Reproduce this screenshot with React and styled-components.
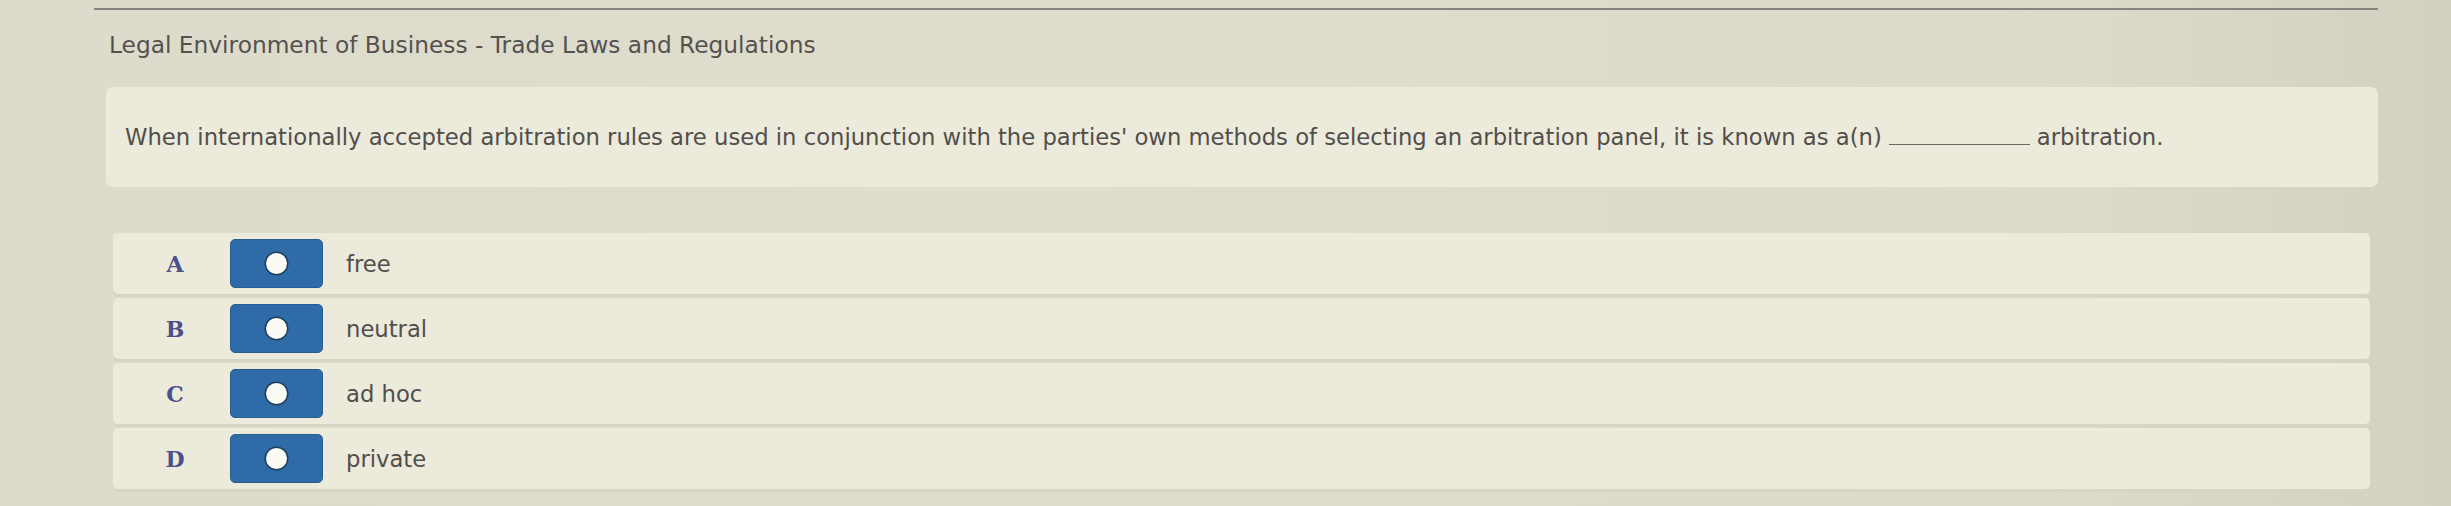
import React from "react";
import styled, { createGlobalStyle } from "styled-components";

const Global = createGlobalStyle`
  html, body { margin: 0; padding: 0; }
  body {
    width: 2451px;
    height: 506px;
    overflow: hidden;
    background: linear-gradient(90deg, #dcdbcc 0%, #dfdecd 40%, #dcdbca 85%, #d2d0c0 100%);
    font-family: "DejaVu Sans", Verdana, sans-serif;
  }
`;

const Page = styled.div`
  display: flex;
  flex-direction: column;
  padding: 8px 73px 0 106px;
`;

const TopRule = styled.div`
  height: 2px;
  background: #85847e;
  margin-left: -12px;
`;

const Title = styled.h1`
  margin: 21px 0 0 3px;
  font-size: 23.3px;
  line-height: 28px;
  font-weight: normal;
  color: #55514f;
`;

const QuestionBox = styled.div`
  margin-top: 28px;
  height: 100px;
  display: flex;
  align-items: center;
  padding: 0 19px;
  background: #ebeadb;
  border-radius: 7px;
  font-size: 22.7px;
  color: #524e4c;
`;

const Blank = styled.span`
  display: inline-block;
  width: 141px;
  border-bottom: 1.5px solid #6a6663;
  margin: 0 7px;
  vertical-align: baseline;
`;

const Options = styled.div`
  margin-top: 46px;
  display: flex;
  flex-direction: column;
  gap: 4px;
  padding: 0 8px 0 7px;
`;

const Row = styled.div`
  display: grid;
  grid-template-columns: 117px 93px 1fr;
  align-items: center;
  height: 61px;
  background: #ebeadb;
  border-radius: 5px;
  box-shadow: 0 3px 0 #d6d5c4;
`;

const Letter = styled.span`
  padding-left: 7px;
  text-align: center;
  font-family: "DejaVu Serif", Georgia, serif;
  font-weight: bold;
  font-size: 22px;
  color: #4b4f8a;
`;

const RadioButton = styled.div`
  height: 49px;
  border-radius: 5px;
  background: #2f6ca7;
  border: 1px solid #285d91;
  box-sizing: border-box;
  display: flex;
  align-items: center;
  justify-content: center;
`;

const Dot = styled.span`
  width: 21px;
  height: 21px;
  border-radius: 50%;
  background: #fbfbf6;
  box-shadow: 0 0 0 1.5px #1f3e5e;
`;

const OptionText = styled.span`
  padding-left: 23px;
  font-size: 22.7px;
  color: #524e4c;
`;

const options = [
  ["A", "free"],
  ["B", "neutral"],
  ["C", "ad hoc"],
  ["D", "private"],
];

export default function App() {
  return (
    <>
      <Global />
      <Page>
        <TopRule />
        <Title>Legal Environment of Business - Trade Laws and Regulations</Title>
        <QuestionBox>
          <span>
            When internationally accepted arbitration rules are used in conjunction with the parties' own methods of selecting an arbitration panel, it is known as a(n)
            <Blank />
            arbitration.
          </span>
        </QuestionBox>
        <Options>
          {options.map(([l, t]) => (
            <Row key={l}>
              <Letter>{l}</Letter>
              <RadioButton>
                <Dot />
              </RadioButton>
              <OptionText>{t}</OptionText>
            </Row>
          ))}
        </Options>
      </Page>
    </>
  );
}
